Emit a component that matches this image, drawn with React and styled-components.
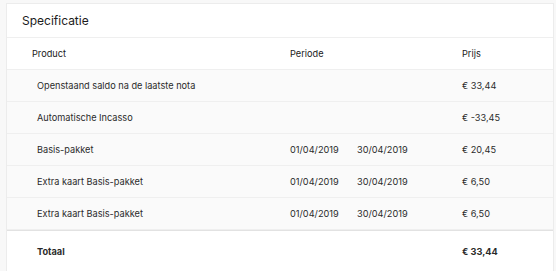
import styled, { createGlobalStyle } from "styled-components";

const GlobalStyle = createGlobalStyle`
  body {
    margin: 0;
    background: #f8f8f8;
    font-family: "Inter", "Liberation Sans", sans-serif;
    color: #222;
  }
`;

const Page = styled.div`
  padding: 3px 2px 0 6px;
`;

const Card = styled.div`
  background: #fff;
  border: 1px solid #ececec;
  border-bottom: none;
`;

const Header = styled.div`
  height: 33px;
  display: flex;
  align-items: center;
  padding-left: 15px;
  font-size: 12px;
  color: #1c1c1c;
  border-bottom: 1px solid #efefef;
`;

const Row = styled.div`
  display: grid;
  grid-template-columns: 258px 67px 105px 1fr;
  align-items: center;
  height: ${(p) => (p.$total ? "41px" : "31px")};
  padding-left: 25px;
  font-size: 9.2px;
  background: ${(p) => (p.$shaded ? "#fafafa" : "#fff")};
  border-bottom: 1px solid #efefef;
  border-top: ${(p) => (p.$total ? "1px solid #e2e2e2" : "none")};
  font-weight: ${(p) => (p.$bold ? 700 : 400)};
  color: ${(p) => (p.$head ? "#1a1a1a" : "#2a2a2a")};
`;

const Cell = styled.div`
  padding-left: ${(p) => (p.$indent ? "5px" : "0")};
  white-space: nowrap;
`;

const rows = [
  { product: "Openstaand saldo na de laatste nota", from: "", to: "", price: "€ 33,44" },
  { product: "Automatische Incasso", from: "", to: "", price: "€ -33,45" },
  { product: "Basis-pakket", from: "01/04/2019", to: "30/04/2019", price: "€ 20,45" },
  { product: "Extra kaart Basis-pakket", from: "01/04/2019", to: "30/04/2019", price: "€ 6,50" },
  { product: "Extra kaart Basis-pakket", from: "01/04/2019", to: "30/04/2019", price: "€ 6,50" },
];

export default function App() {
  return (
    <>
      <GlobalStyle />
      <Page>
        <Card>
          <Header>Specificatie</Header>
          <Row $head>
            <Cell>Product</Cell>
            <Cell>Periode</Cell>
            <Cell />
            <Cell>Prijs</Cell>
          </Row>
          {rows.map((r, i) => (
            <Row key={i} $shaded>
              <Cell $indent>{r.product}</Cell>
              <Cell>{r.from}</Cell>
              <Cell>{r.to}</Cell>
              <Cell>{r.price}</Cell>
            </Row>
          ))}
          <Row $total $bold>
            <Cell $indent>Totaal</Cell>
            <Cell />
            <Cell />
            <Cell>€ 33,44</Cell>
          </Row>
        </Card>
      </Page>
    </>
  );
}
